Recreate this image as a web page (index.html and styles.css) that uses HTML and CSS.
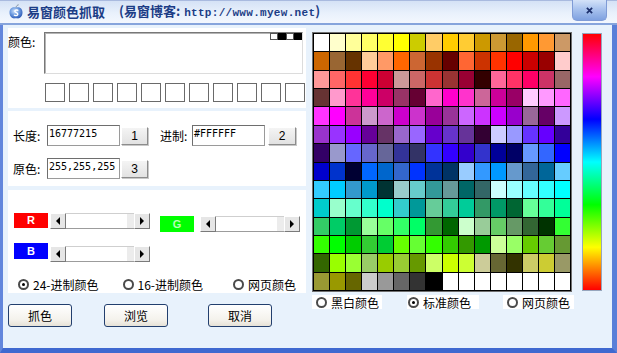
FILE: index.html
```html
<!DOCTYPE html>
<html lang="zh-CN">
<head>
  <meta charset="UTF-8">
  <title>易窗颜色抓取</title>
  <link rel="stylesheet" href="styles.css">
</head>
<body>
  <div class="window">
    <div class="titlebar">
      <svg class="app-icon" viewBox="0 0 16 16">
        <defs>
          <radialGradient id="ball" cx="0.4" cy="0.35" r="0.7">
            <stop offset="0" stop-color="#cfe2fb"/>
            <stop offset="0.5" stop-color="#6d9be0"/>
            <stop offset="1" stop-color="#2a57b4"/>
          </radialGradient>
        </defs>
        <path d="M8 3.5 C5 2.5 1.5 4 1.5 8.5 C1.5 12.5 4.5 15 7 14.3 C7.6 14.1 8.4 14.1 9 14.3 C11.5 15 14.5 12.5 14.5 8.5 C14.5 4 11 2.5 8 3.5 Z" fill="url(#ball)"/>
        <path d="M8 3.5 C8.3 2 9.3 1 10.6 0.8" stroke="#7a8a9a" stroke-width="1" fill="none"/>
        <path d="M10.2 6.6 C9.6 5.8 7 5.6 6.8 7.2 C6.6 8.8 10 8.6 9.8 10.4 C9.6 12 6.8 11.8 6 11" stroke="#fff" stroke-width="1.3" fill="none"/>
      </svg>
      <span class="title">易窗颜色抓取</span>
      <span class="title-sub">(易窗博客:<span class="url">http://www.myew.net</span>)</span>
      <div class="close-btn">
        <svg viewBox="0 0 8 8"><path d="M1 1 L7 7 M7 1 L1 7" stroke="#1c2f6b" stroke-width="2"/></svg>
      </div>
    </div>

    <div class="frame">
      <div class="left">
        <div class="panel p-color">
          <div class="color-row">
            <span class="label">颜色:</span>
            <div class="preview">
              <div class="mini">
                <span class="mini-w"></span><span class="mini-b"></span><span class="mini-w"></span><span class="mini-b"></span>
              </div>
            </div>
          </div>
          <div class="history">
            <span></span><span></span><span></span><span></span><span></span><span></span>
            <span></span><span></span><span></span><span></span><span></span>
          </div>
        </div>

        <div class="panel p-values">
          <div class="value-row">
            <span class="label">长度:</span>
            <div class="field">16777215</div>
            <div class="small-btn">1</div>
            <span class="label label-hex">进制:</span>
            <div class="field">#FFFFFF</div>
            <div class="small-btn btn-2">2</div>
          </div>
          <div class="value-row row-2">
            <span class="label">原色:</span>
            <div class="field">255,255,255</div>
            <div class="small-btn">3</div>
          </div>
        </div>

        <div class="panel p-rgb">
          <div class="rgb-row">
            <span class="chan chan-r">R</span>
            <div class="scroll"><span class="arr arr-l"></span><span class="track"></span><span class="thumb"></span><span class="arr arr-r"></span></div>
            <span class="chan chan-g">G</span>
            <div class="scroll"><span class="arr arr-l"></span><span class="track"></span><span class="thumb"></span><span class="arr arr-r"></span></div>
          </div>
          <div class="rgb-row row-b">
            <span class="chan chan-b">B</span>
            <div class="scroll"><span class="arr arr-l"></span><span class="track"></span><span class="thumb"></span><span class="arr arr-r"></span></div>
          </div>
          <div class="radio-row">
            <label class="opt"><span class="radio checked"></span>24-进制颜色</label>
            <label class="opt opt-16"><span class="radio"></span>16-进制颜色</label>
            <label class="opt opt-web"><span class="radio"></span>网页颜色</label>
          </div>
        </div>

        <div class="actions">
          <div class="xp-btn">抓色</div>
          <div class="xp-btn btn-browse">浏览</div>
          <div class="xp-btn btn-cancel">取消</div>
        </div>
      </div>

      <div class="right">
        <div class="palette-row">
          <div id="grid" class="grid"></div>
          <div class="spectrum"></div>
        </div>
        <div class="modes">
          <label class="mode"><span class="radio"></span>黑白颜色</label>
          <label class="mode mode-std"><span class="radio checked"></span>标准颜色</label>
          <label class="mode mode-web"><span class="radio"></span>网页颜色</label>
        </div>
      </div>
    </div>
  </div>

  <script>
    const palette = [
      'FFFFFF FFFFCC FFFF99 FFFF66 FFFF33 FFFF00 CCCC00 FFCC66 FFCC00 FFCC33 CC9900 CC9933 996600 FF9900 FF9933 CC9966',
      'CC6600 996633 663300 FFCC99 FF9966 FF6600 CC6633 993300 660000 FF6633 CC3300 FF3300 FF0000 CC0000 990000 FFCCCC',
      'FF9999 FF6666 FF3333 FF0033 CC0033 CC9999 CC6666 CC3333 993333 990033 330000 FF6699 FF3366 FF0066 CC3366 996666',
      '663333 FF99CC FF3399 FF0099 CC0066 993366 660033 FF66CC FF00CC FF33CC CC6699 CC0099 990066 FFCCFF FF99FF FF66FF',
      'FF33FF FF00FF CC3399 CC99CC CC66CC CC00CC CC33CC 990099 993399 CC66FF CC33FF CC00FF 9900CC 996699 660066 CC99FF',
      '9933CC 9933FF 9900FF 660099 663366 9966CC 9966FF 6600CC 6633CC 663399 330033 CCCCFF 9999FF 6633FF 6600FF 330099',
      '330066 9999CC 6666FF 6666CC 666699 333399 333366 3333FF 3300FF 3300CC 3333CC 000099 000066 6699FF 3366FF 0000FF',
      '0000CC 0033CC 000033 0066FF 0066CC 3366CC 0033FF 003399 003366 99CCFF 3399FF 0099FF 6699CC 336699 006699 66CCFF',
      '33CCFF 00CCFF 3399CC 0099CC 003333 99CCCC 66CCCC 339999 669999 006666 336666 CCFFFF 99FFFF 66FFFF 33FFFF 00FFFF',
      '00CCCC 99FFCC 66FFCC 33FFCC 00FFCC 33CCCC 009999 66CC99 33CC99 00CC99 339966 009966 006633 66FF99 33FF99 00FF99',
      '33CC66 00CC66 009933 99FF99 66FF66 33FF66 00FF66 339933 006600 CCFFCC 99CC99 66CC66 669966 336633 003300 33FF33',
      '33FF00 00FF00 00CC00 33CC33 00CC33 66FF00 66FF33 33FF00 33CC00 339900 009900 CCFF99 99FF66 66CC00 66CC33 669933',
      '336600 99FF00 99FF33 99CC66 99CC00 99CC33 669900 CCFF66 CCFF00 CCFF33 CCCC99 666633 333300 CCCC66 CCCC33 999966',
      '999933 999900 666600 CCCCCC 999999 666666 333333 000000 FFFFFF FFFFFF FFFFFF FFFFFF FFFFFF FFFFFF FFFFFF FFFFFF'
    ];

    const grid = document.getElementById('grid');
    palette.forEach(row => {
      row.split(' ').forEach(hex => {
        const cell = document.createElement('div');
        cell.className = 'cell';
        cell.style.background = '#' + hex;
        grid.appendChild(cell);
      });
    });
  </script>
</body>
</html>
```

FILE: styles.css
```css
html, body {
  margin: 0;
  padding: 0;
}
body {
  width: 617px;
  height: 353px;
  overflow: hidden;
  font-family: "Noto Sans CJK SC", sans-serif;
  font-size: 12px;
  color: #000;
}
.window {
  width: 617px;
  height: 353px;
  display: flex;
  flex-direction: column;
}

/* title bar */
.titlebar {
  height: 25px;
  box-sizing: border-box;
  display: flex;
  align-items: center;
  border-top: 1px solid #a9badf;
  border-bottom: 2px solid #86a4dc;
  background: linear-gradient(#d5e2f6, #e9f1fc 55%, #f3f7fe);
  color: #1c3d86;
  font-weight: bold;
}
.app-icon {
  width: 16px;
  height: 16px;
  margin-left: 8px;
  margin-right: 3px;
}
.title {
  font-size: 13px;
  line-height: 16px;
}
.title-sub {
  margin-left: 14px;
  font-size: 13px;
  line-height: 16px;
}
.url {
  font-family: "Liberation Mono", monospace;
  font-size: 11px;
  letter-spacing: 0.3px;
  margin-left: 4px;
}
.close-btn {
  margin-left: auto;
  margin-right: 10px;
  margin-top: -1px;
  align-self: flex-start;
  width: 35px;
  height: 21px;
  box-sizing: border-box;
  border: 1px solid #7f9bd6;
  border-top: none;
  border-radius: 0 0 5px 5px;
  background: linear-gradient(#d4e2f8, #a9c3ee 45%, #7fa1e0);
  display: flex;
  align-items: center;
  justify-content: center;
}
.close-btn svg {
  width: 7px;
  height: 7px;
}

/* client frame */
.frame {
  flex: 1;
  display: flex;
  padding: 3px 0 0 5px;
  background: #e8f2fc;
  border-left: 3px solid #6286dc;
  border-right: 5px solid #5a7fd8;
  border-bottom: 5px solid #3f69d0;
}
.left {
  width: 298px;
  display: flex;
  flex-direction: column;
}
.panel {
  background: #fff;
}
.label {
  line-height: 14px;
  white-space: nowrap;
}

/* colour preview panel */
.p-color {
  height: 80px;
  box-sizing: border-box;
  padding-top: 4px;
}
.color-row {
  display: flex;
}
.color-row .label {
  width: 36px;
  padding-top: 3px;
}
.preview {
  width: 259px;
  height: 42px;
  box-sizing: border-box;
  border: 1px solid;
  border-color: #787878 #dcdcdc #dcdcdc #787878;
  box-shadow: inset 1px 1px 0 #b4b4b4;
  background: #fff;
  display: flex;
  justify-content: flex-end;
  align-items: flex-start;
}
.mini {
  display: flex;
}
.mini span {
  width: 8px;
  height: 7px;
  box-sizing: border-box;
}
.mini-w {
  border: 1px solid #555;
  background: #fff;
}
.mini-b {
  background: #000;
}
.history {
  display: flex;
  gap: 4px;
  margin-top: 9px;
  padding-left: 37px;
}
.history span {
  width: 20px;
  height: 19px;
  box-sizing: border-box;
  border: 1px solid #6a6a6a;
}

/* value panel */
.p-values {
  margin-top: 3px;
  height: 75px;
  box-sizing: border-box;
  padding: 14px 0 0 5px;
}
.value-row {
  display: flex;
  align-items: center;
}
.value-row .label {
  width: 34px;
}
.value-row .label-hex {
  width: 32px;
  margin-left: 12px;
}
.row-2 {
  margin-top: 12px;
}
.field {
  width: 73px;
  height: 21px;
  box-sizing: border-box;
  border: 1px solid #6e6e6e;
  border-right-color: #9a9a9a;
  border-bottom-color: #9a9a9a;
  padding: 1px 1px 0;
  font-family: "DejaVu Sans Mono", monospace;
  font-size: 10px;
  line-height: 14px;
}
.small-btn {
  width: 27px;
  height: 18px;
  box-sizing: border-box;
  margin-left: 1px;
  border: 1px solid;
  border-color: #fff #8c8c8c #8c8c8c #fff;
  box-shadow: 1px 1px 0 #c8c8c8;
  background: linear-gradient(#f4f4f4, #e2e2e2);
  font-family: "Liberation Sans", sans-serif;
  font-size: 12px;
  line-height: 16px;
  text-align: center;
}
.btn-2 {
  width: 28px;
  margin-left: 3px;
}

/* rgb panel */
.p-rgb {
  margin-top: 4px;
  height: 103px;
  box-sizing: border-box;
  padding: 23px 0 0 6px;
}
.rgb-row {
  display: flex;
  align-items: flex-start;
}
.row-b {
  margin-top: 11px;
}
.chan {
  width: 34px;
  height: 15px;
  margin-right: 2px;
  color: #fff;
  font-family: "Liberation Sans", sans-serif;
  font-weight: bold;
  font-size: 11px;
  line-height: 15px;
  text-align: center;
}
.chan-r { background: #ff0000; }
.chan-b { background: #0000ff; height: 16px; line-height: 16px; }
.chan-g {
  background: #00ff00;
  color: #b8ffb8;
  height: 16px;
  line-height: 16px;
  margin: 3px 6px 0 10px;
}
.rgb-row .scroll:last-child {
  margin-top: 3px;
}
.scroll {
  width: 100px;
  height: 16px;
  display: flex;
}
.arr {
  width: 16px;
  height: 16px;
  box-sizing: border-box;
  border: 1px solid;
  border-color: #fff #7a7a7a #7a7a7a #fff;
  background: #e6e6e6;
  display: flex;
  align-items: center;
  justify-content: center;
}
.arr::after {
  content: "";
  border-top: 4px solid transparent;
  border-bottom: 4px solid transparent;
}
.arr-l::after { border-right: 4px solid #000; }
.arr-r::after { border-left: 4px solid #000; }
.track {
  flex: 1;
  box-sizing: border-box;
  border-top: 1px solid #cfcfcf;
  border-bottom: 1px solid #9c9c9c;
  background: #fff;
}
.thumb {
  width: 7px;
  box-sizing: border-box;
  border-top: 1px solid #cfcfcf;
  border-bottom: 1px solid #9c9c9c;
  background: #ececec;
}
.radio-row {
  display: flex;
  margin-top: 15px;
  padding-left: 4px;
}
.opt, .mode {
  display: flex;
  align-items: center;
  line-height: 15px;
  white-space: nowrap;
}
.opt-16 { margin-left: 24px; }
.opt-web { margin-left: 30px; }
.radio {
  width: 11px;
  height: 11px;
  box-sizing: border-box;
  border: 2px solid #4a4a4a;
  border-radius: 50%;
  background: #fff;
  margin-right: 4px;
  display: flex;
  align-items: center;
  justify-content: center;
}
.radio.checked::after {
  content: "";
  width: 3px;
  height: 3px;
  border-radius: 50%;
  background: #000;
}

/* action buttons */
.actions {
  display: flex;
  margin-top: 11px;
}
.xp-btn {
  width: 64px;
  height: 23px;
  box-sizing: border-box;
  border: 1px solid #223f6e;
  border-radius: 3px;
  background: linear-gradient(#ffffff, #f4f2ec 70%, #e6e2d6);
  text-align: center;
  line-height: 21px;
}
.btn-browse { margin-left: 32px; }
.btn-cancel { margin-left: 40px; }

/* palette */
.right {
  margin-left: 6px;
  padding-top: 4px;
}
.palette-row {
  display: flex;
  align-items: flex-start;
}
.grid {
  width: 260px;
  height: 260px;
  box-sizing: border-box;
  border: 1px solid #6f6f6f;
  padding: 1px;
  background: #000;
  display: grid;
  grid-template-columns: repeat(16, 1fr);
  grid-template-rows: repeat(14, 1fr);
  gap: 1px;
}
.spectrum {
  width: 20px;
  height: 258px;
  box-sizing: border-box;
  margin: 1px 0 0 10px;
  border: 1px solid #97a6bd;
  background: linear-gradient(#ff0000, #ff00ff 16.7%, #0000ff 33.3%, #00ffff 50%, #00ff00 66.7%, #ffff00 83.3%, #ff0000);
}
.modes {
  display: flex;
  margin-top: 3px;
}
.mode {
  background: #fff;
  height: 14px;
  width: 70px;
  padding-left: 4px;
  box-sizing: border-box;
}
.mode-std {
  margin-left: 25px;
  padding-left: 1px;
  width: 72px;
}
.mode-web {
  margin-left: 24px;
  width: 71px;
}
```
